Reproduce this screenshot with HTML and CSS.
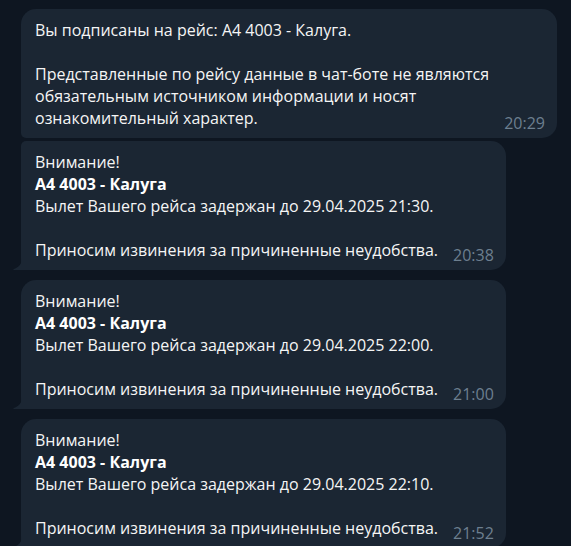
FILE: index.html
```html
<!DOCTYPE html>
<html lang="ru">
<head>
    <meta charset="UTF-8">
    <meta name="viewport" content="width=device-width, initial-scale=1.0">
    <title>Чат-бот рейсов</title>
    <link rel="stylesheet" href="styles.css">
</head>
<body>
    <div class="chat">

        <div class="group">
            <div class="bubble bubble-first">
                Вы подписаны на рейс: А4 4003 - Калуга.<br><br>
                Представленные по рейсу данные в чат-боте не являются обязательным источником информации и носят ознакомительный характер.<span class="time">20:29</span>
            </div>

            <div class="bubble bubble-last">
                Внимание!<br>
                <b>А4 4003 - Калуга</b><br>
                Вылет Вашего рейса задержан до 29.04.2025 21:30.<br><br>
                Приносим извинения за причиненные неудобства.<span class="time">20:38</span>
                <svg class="tail" width="9" height="12" viewBox="0 0 9 12"><path d="M9 0 C9 6 6 9 1 11 C0 11.4 0.3 12 1 12 H9 Z"/></svg>
            </div>
        </div>

        <div class="group">
            <div class="bubble bubble-single">
                Внимание!<br>
                <b>А4 4003 - Калуга</b><br>
                Вылет Вашего рейса задержан до 29.04.2025 22:00.<br><br>
                Приносим извинения за причиненные неудобства.<span class="time">21:00</span>
                <svg class="tail" width="9" height="12" viewBox="0 0 9 12"><path d="M9 0 C9 6 6 9 1 11 C0 11.4 0.3 12 1 12 H9 Z"/></svg>
            </div>
        </div>

        <div class="group">
            <div class="bubble bubble-single">
                Внимание!<br>
                <b>А4 4003 - Калуга</b><br>
                Вылет Вашего рейса задержан до 29.04.2025 22:10.<br><br>
                Приносим извинения за причиненные неудобства.<span class="time">21:52</span>
                <svg class="tail" width="9" height="12" viewBox="0 0 9 12"><path d="M9 0 C9 6 6 9 1 11 C0 11.4 0.3 12 1 12 H9 Z"/></svg>
            </div>
        </div>

    </div>
</body>
</html>
```

FILE: styles.css
```css
body {
    margin: 0;
    background-color: #0e1621; /* Telegram dark background */
    font-family: 'Open Sans', 'Noto Sans', sans-serif;
    overflow: hidden;
}

.chat {
    display: flex;
    flex-direction: column;
    gap: 10px;
    padding: 9px 14px 0 21px;
}

.group {
    display: flex;
    flex-direction: column;
    align-items: flex-start;
    gap: 3px;
}

.bubble {
    position: relative;
    display: flow-root;
    width: fit-content;
    max-width: 536px;
    box-sizing: border-box;
    padding: 10px 12px 9px 14px;
    background-color: #1b2633; /* Incoming message bubble */
    color: #f5f5f5;
    font-size: 16px;
    line-height: 22px;
}

.bubble-first {
    border-radius: 15px 15px 15px 5px;
}

.bubble-last {
    border-radius: 5px 15px 15px 0;
}

.bubble-single {
    border-radius: 15px 15px 15px 0;
}

.bubble b {
    font-weight: 700;
    color: #ffffff;
}

/* Time sits on the last line, pushed to the right edge */
.time {
    float: right;
    margin: 5px 0 -5px 15px;
    color: #6d7f8f;
    font-size: 16px;
    line-height: 22px;
}

/* Little tail at the bottom-left of the last bubble */
.tail {
    position: absolute;
    left: -8px;
    bottom: 0;
    fill: #1b2633;
}
```
